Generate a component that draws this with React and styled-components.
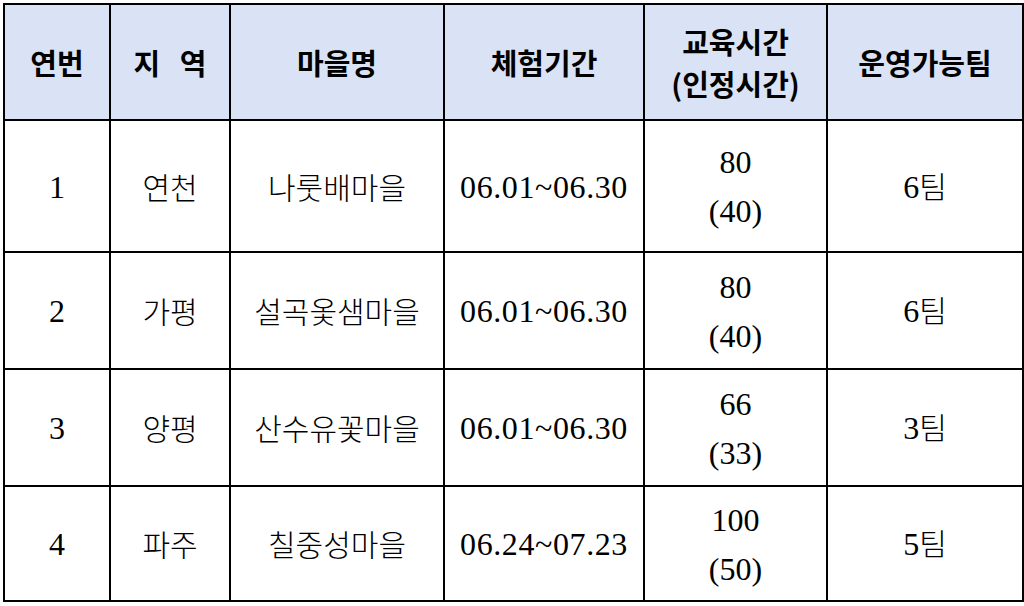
import React from "react";
import styled, { createGlobalStyle } from "styled-components";

const Global = createGlobalStyle`
  html, body { margin: 0; padding: 0; background: #ffffff; }
  body { width: 1024px; height: 606px; overflow: hidden; }
`;

const Page = styled.div`
  padding: 3px 0 0 3px;
`;

const Table = styled.table`
  border-collapse: collapse;
  table-layout: fixed;
  width: 1019px;
  color: #000;
`;

const HeadCell = styled.th`
  background: #dae3f5;
  border: 2px solid #000;
  height: 114px;
  padding: 0;
  text-align: center;
  vertical-align: middle;
  font-family: "Noto Sans CJK KR", "Noto Sans", sans-serif;
  font-weight: 700;
  font-size: 29px;
  line-height: 42px;
  white-space: pre;
`;

const Cell = styled.td`
  border: 2px solid #000;
  height: ${(p) => p.$h}px;
  padding: 0;
  text-align: center;
  vertical-align: middle;
  font-family: "Noto Sans CJK KR", sans-serif;
  font-weight: 300;
  font-size: 30px;
  line-height: 47px;
`;

const Num = styled.span`
  font-family: "Liberation Serif", serif;
  font-weight: 400;
  font-size: 32px;
  letter-spacing: ${(p) => (p.$wide ? "0.6px" : "0")};
`;

const Line = styled.div``;

const cols = [106, 120, 214, 200, 183, 196];
const heads = ["연번", "지   역", "마을명", "체험기간", "교육시간\n(인정시간)", "운영가능팀"];

const rows = [
  { no: "1", area: "연천", name: "나룻배마을", period: "06.01~06.30", hours: ["80", "(40)"], team: "6", h: 130 },
  { no: "2", area: "가평", name: "설곡옻샘마을", period: "06.01~06.30", hours: ["80", "(40)"], team: "6", h: 115 },
  { no: "3", area: "양평", name: "산수유꽃마을", period: "06.01~06.30", hours: ["66", "(33)"], team: "3", h: 115 },
  { no: "4", area: "파주", name: "칠중성마을", period: "06.24~07.23", hours: ["100", "(50)"], team: "5", h: 113 },
];

export default function App() {
  return (
    <Page>
      <Global />
      <Table>
        <colgroup>
          {cols.map((w, i) => (
            <col key={i} style={{ width: w }} />
          ))}
        </colgroup>
        <thead>
          <tr>
            {heads.map((h) => (
              <HeadCell key={h}>{h}</HeadCell>
            ))}
          </tr>
        </thead>
        <tbody>
          {rows.map((r) => (
            <tr key={r.no}>
              <Cell $h={r.h}>
                <Num>{r.no}</Num>
              </Cell>
              <Cell $h={r.h}>{r.area}</Cell>
              <Cell $h={r.h}>{r.name}</Cell>
              <Cell $h={r.h}>
                <Num $wide>{r.period}</Num>
              </Cell>
              <Cell $h={r.h}>
                {r.hours.map((t) => (
                  <Line key={t}>
                    <Num>{t}</Num>
                  </Line>
                ))}
              </Cell>
              <Cell $h={r.h}>
                <Num>{r.team}</Num>팀
              </Cell>
            </tr>
          ))}
        </tbody>
      </Table>
    </Page>
  );
}
